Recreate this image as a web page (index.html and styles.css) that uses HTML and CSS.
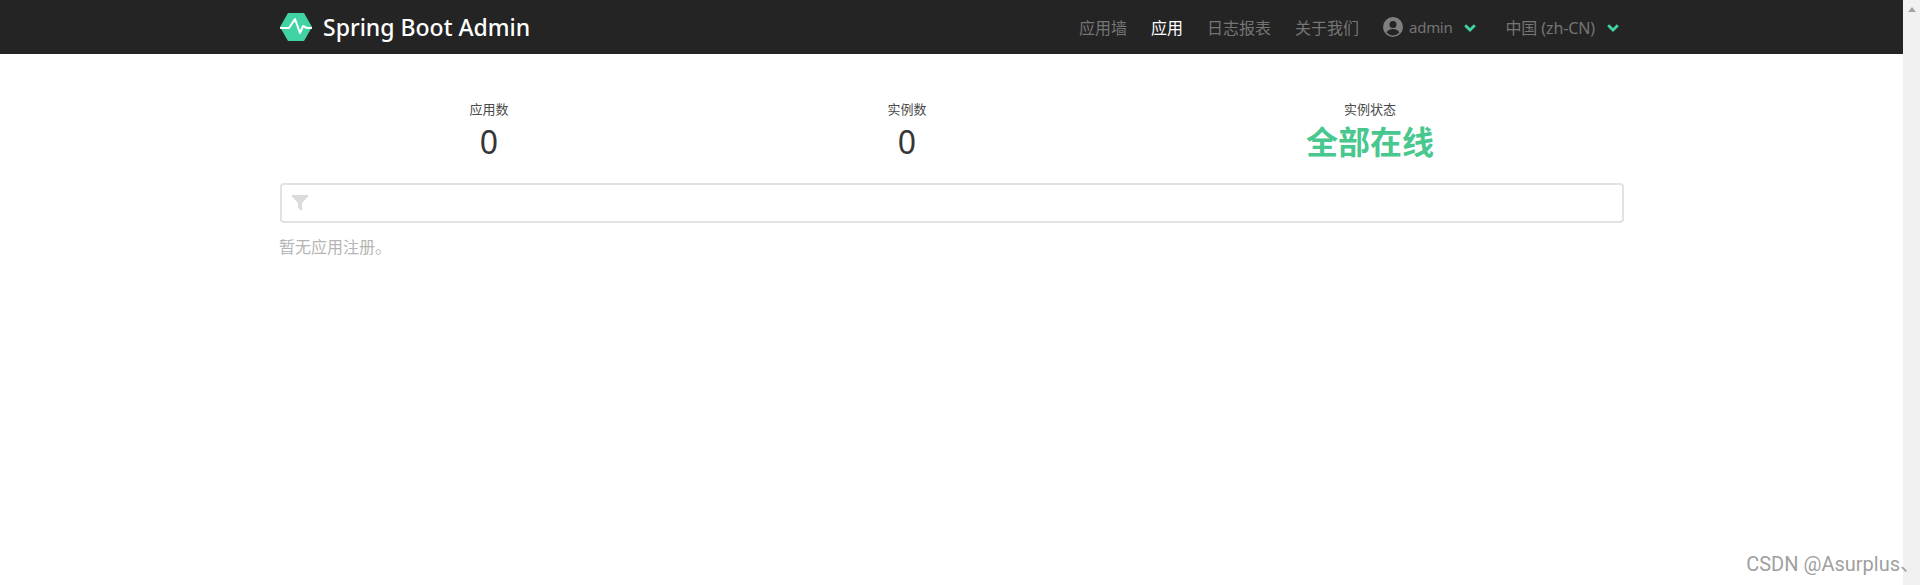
FILE: index.html
```html
<!DOCTYPE html>
<html lang="zh-CN">
<head>
<meta charset="utf-8">
<title>Spring Boot Admin</title>
<link rel="stylesheet" href="styles.css">
</head>
<body>
<div class="viewport">
  <div class="page">
    <nav class="navbar">
      <div class="container nav-inner">
        <a class="brand">
          <svg class="logo" viewBox="0 0 32 28" width="32" height="28">
            <path d="M8 0H24L32 14L24 28H8L0 14Z" fill="#42d3a5"/>
            <path d="M0 15H9L15 6L20 20L23 13L27 15H32" fill="none" stroke="#fff" stroke-width="2" stroke-linejoin="round"/>
          </svg>
          <span>Spring Boot Admin</span>
        </a>
        <div class="nav-items">
          <a class="nav-link">应用墙</a>
          <a class="nav-link active">应用</a>
          <a class="nav-link">日志报表</a>
          <a class="nav-link">关于我们</a>
          <a class="nav-link drop">
            <svg class="user" viewBox="0 0 20 20" width="20" height="20">
              <circle cx="10" cy="10" r="10" fill="#7f7f7f"/>
              <circle cx="10" cy="7.6" r="3.5" fill="#242424"/>
              <path d="M3.6 15.6C5 12.8 7.5 12 10 12s5 .8 6.4 3.6A8.6 8.6 0 0 1 10 18.400a8.600 8.600 0 0 1-6.400-2.800Z" fill="#242424"/>
            </svg>
            <span class="user-name">admin</span>
            <svg class="chev" viewBox="0 0 12 8" width="12" height="8"><path d="M1.200 1.300L6 6L10.800 1.300" fill="none" stroke="#42d3a5" stroke-width="2.800"/></svg>
          </a>
          <a class="nav-link drop lang">
            <span class="lang-name">中国 (zh-CN)</span>
            <svg class="chev" viewBox="0 0 12 8" width="12" height="8"><path d="M1.200 1.300L6 6L10.800 1.300" fill="none" stroke="#42d3a5" stroke-width="2.800"/></svg>
          </a>
        </div>
      </div>
    </nav>
    <main class="container content">
      <section class="stats">
        <div class="stat"><p class="heading">应用数</p><p class="value">0</p></div>
        <div class="stat"><p class="heading">实例数</p><p class="value">0</p></div>
        <div class="stat"><p class="heading">实例状态</p><p class="value ok">全部在线</p></div>
      </section>
      <div class="filter">
        <svg class="funnel" viewBox="0 0 16 16" width="16" height="16"><path d="M0 0H16V1.500L10 8V16L6 13V8L0 1.500Z" fill="#dbdbdb"/></svg>
      </div>
      <p class="empty">暂无应用注册。</p>
    </main>
  </div>
  <div class="scrollbar">
    <svg viewBox="0 0 8 5" width="8" height="5"><path d="M4 0L8 5H0Z" fill="#a3a3a3"/></svg>
  </div>
  <div class="watermark">CSDN @Asurplus、</div>
</div>
</body>
</html>
```
FILE: styles.css
```css
* { box-sizing: border-box; }
html, body { margin: 0; padding: 0; height: 100%; overflow: hidden; background: #fff; }
body { font-family: "Noto Sans", "Noto Sans CJK SC", sans-serif; color: #363636; font-size: 16px; }
p { margin: 0; }
.viewport { display: flex; height: 585px; position: relative; }
.page { flex: 1; min-width: 0; }
.scrollbar { width: 17px; background: #f1f1f1; display: flex; flex-direction: column; align-items: center; padding-top: 7px; }
.container { width: 1344px; margin-left: 280px; }
.navbar { background: #242424; height: 54px; }
.nav-inner { display: flex; align-items: center; justify-content: space-between; height: 54px; }
.brand { display: flex; align-items: center; gap: 11px; color: #fff; font-size: 23px; font-weight: 500; }
.logo { display: block; }
.nav-items { display: flex; align-items: center; height: 54px; padding-right: 5px; padding-bottom: 1px; }
.nav-link { color: #757575; font-size: 16px; margin-left: 24px; display: flex; align-items: center; white-space: nowrap; }
.nav-link.active { color: #fff; }
.drop { gap: 6px; }
.user-name { font-size: 15px; letter-spacing: -0.3px; }
.lang-name { letter-spacing: -0.1px; }
.lang { margin-left: 29px; }
.chev { margin-left: 6px; margin-top: 2px; }
.user { display: block; }
.content { display: block; }
.stats { height: 129px; display: grid; grid-template-columns: 418px 418px 1fr; padding-top: 48px; }
.stat { text-align: center; }
.heading { font-size: 13px; line-height: 15px; color: #4a4a4a; }
.value { font-size: 32px; line-height: 40px; margin-top: 5px; color: #363636; }
.value.ok { color: #48c78e; font-weight: 700; }
.filter { height: 40px; border: 2px solid #e2e2e2; border-radius: 4px; display: flex; align-items: center; padding-left: 10px; }
.funnel { display: block; }
.empty { margin-top: 12px; font-size: 16px; line-height: 24px; color: #b5b5b5; margin-left: -1px; }
.watermark { position: absolute; right: 0; bottom: 7px; font-family: Roboto, "Noto Sans CJK SC", sans-serif; font-size: 20px; line-height: 28px; color: #a0a0a0; white-space: nowrap; }
```
